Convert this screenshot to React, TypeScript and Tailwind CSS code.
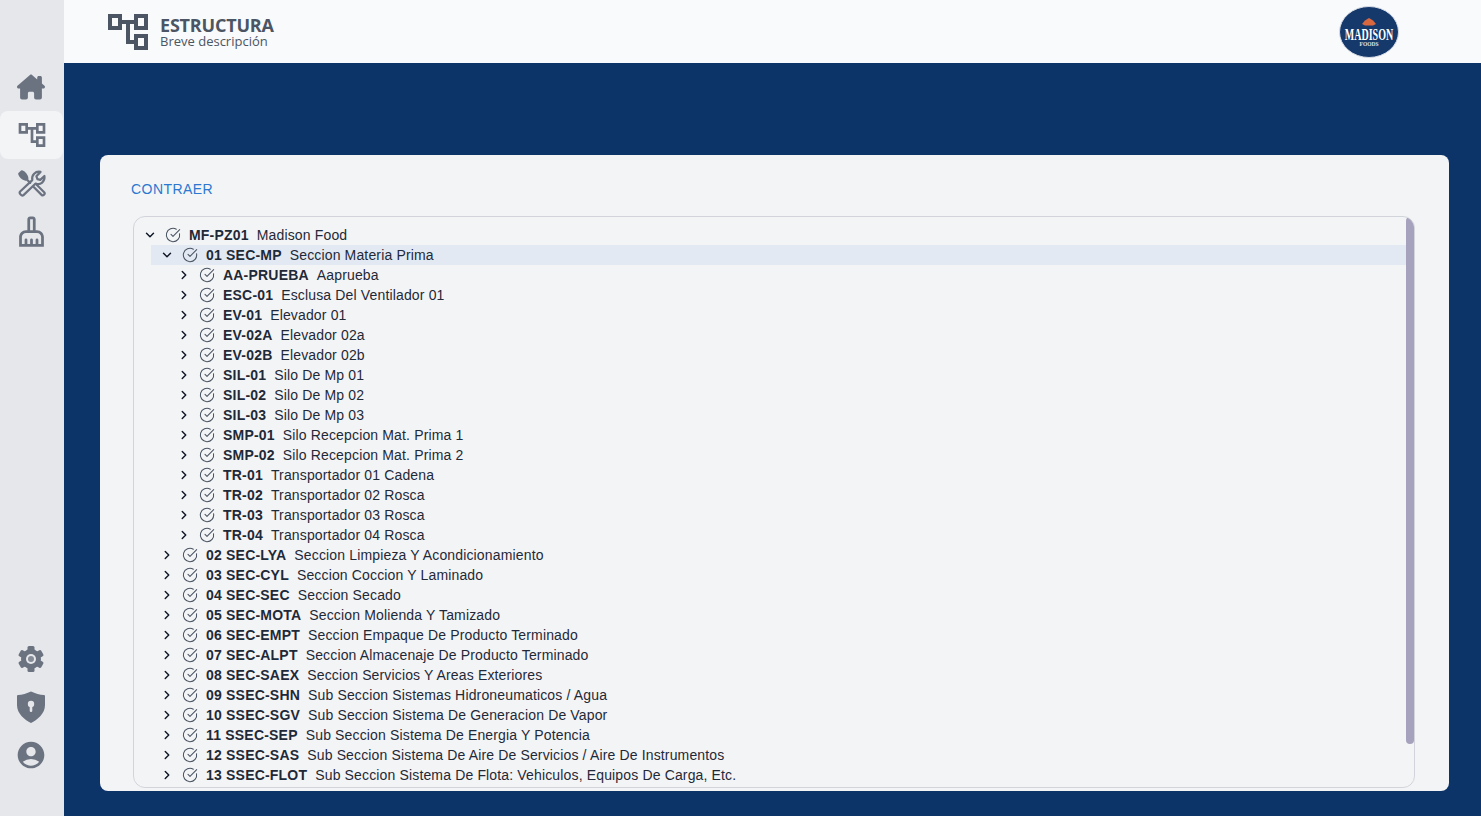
import { useState } from "react";
import { FaHouseChimney } from "react-icons/fa6";
import {
  MdAccountCircle,
  MdOutlineAccountTree,
  MdOutlineCleaningServices,
} from "react-icons/md";
import { ChevronDown, ChevronRight, CircleCheckBig } from "lucide-react";

interface TreeNode {
  code: string;
  name: string;
  open?: boolean;
  active?: boolean;
  children?: TreeNode[];
}

const equipos: TreeNode[] = [
  { code: "AA-PRUEBA", name: "Aaprueba" },
  { code: "ESC-01", name: "Esclusa Del Ventilador 01" },
  { code: "EV-01", name: "Elevador 01" },
  { code: "EV-02A", name: "Elevador 02a" },
  { code: "EV-02B", name: "Elevador 02b" },
  { code: "SIL-01", name: "Silo De Mp 01" },
  { code: "SIL-02", name: "Silo De Mp 02" },
  { code: "SIL-03", name: "Silo De Mp 03" },
  { code: "SMP-01", name: "Silo Recepcion Mat. Prima 1" },
  { code: "SMP-02", name: "Silo Recepcion Mat. Prima 2" },
  { code: "TR-01", name: "Transportador 01 Cadena" },
  { code: "TR-02", name: "Transportador 02 Rosca" },
  { code: "TR-03", name: "Transportador 03 Rosca" },
  { code: "TR-04", name: "Transportador 04 Rosca" },
];

const tree: TreeNode = {
  code: "MF-PZ01",
  name: "Madison Food",
  open: true,
  children: [
    {
      code: "01 SEC-MP",
      name: "Seccion Materia Prima",
      open: true,
      active: true,
      children: equipos,
    },
    { code: "02 SEC-LYA", name: "Seccion Limpieza Y Acondicionamiento" },
    { code: "03 SEC-CYL", name: "Seccion Coccion Y Laminado" },
    { code: "04 SEC-SEC", name: "Seccion Secado" },
    { code: "05 SEC-MOTA", name: "Seccion Molienda Y Tamizado" },
    { code: "06 SEC-EMPT", name: "Seccion Empaque De Producto Terminado" },
    { code: "07 SEC-ALPT", name: "Seccion Almacenaje De Producto Terminado" },
    { code: "08 SEC-SAEX", name: "Seccion Servicios Y Areas Exteriores" },
    { code: "09 SSEC-SHN", name: "Sub Seccion Sistemas Hidroneumaticos / Agua" },
    { code: "10 SSEC-SGV", name: "Sub Seccion Sistema De Generacion De Vapor" },
    { code: "11 SSEC-SEP", name: "Sub Seccion Sistema De Energia Y Potencia" },
    {
      code: "12 SSEC-SAS",
      name: "Sub Seccion Sistema De Aire De Servicios / Aire De Instrumentos",
    },
    {
      code: "13 SSEC-FLOT",
      name: "Sub Seccion Sistema De Flota: Vehiculos, Equipos De Carga, Etc.",
    },
  ],
};

const TreeItem = ({ node }: { node: TreeNode }) => {
  const [open, setOpen] = useState(!!node.open);
  return (
    <div>
      <div
        className={`flex h-5 items-center pl-[9px] ${node.active ? "bg-[#e2e9f3]" : ""}`}
      >
        <button
          onClick={() => setOpen(!open)}
          className="flex w-[14px] cursor-pointer items-center justify-center text-[#111827]"
        >
          {open ? (
            <ChevronDown size={14} strokeWidth={2.5} />
          ) : (
            <ChevronRight size={14} strokeWidth={2.5} />
          )}
        </button>
        <CircleCheckBig size={16} strokeWidth={1.6} className="ml-[8px] text-[#4b5563]" />
        <span className="ml-[8px] font-bold tracking-[0.2px] text-[#1f2937]">{node.code}</span>
        <span className="ml-2 tracking-[0.15px] text-[#1f2937]">{node.name}</span>
      </div>
      {open && node.children && (
        <div className="ml-[17px]">
          {node.children.map((child) => (
            <TreeItem key={child.code} node={child} />
          ))}
        </div>
      )}
    </div>
  );
};

const ToolsIcon = () => (
  <svg width="31" height="31" viewBox="0 0 24 24" fill="none" stroke="currentColor" strokeWidth="1.7" strokeLinejoin="round" strokeLinecap="round">
    <path d="M3.2 18.2 12.6 9.4C11.9 5.5 15 2.2 19 3L15.8 6.4 16.6 8.6 18.8 9.2 22 6.2C22.6 10.5 19 13.6 15.2 12L5.8 21C4.5 22.2 2 19.6 3.2 18.2Z" />
    <path d="M2.5 4.5 4.5 2.5C6.5 3 8.5 5.5 8.8 8L7.5 9C5 8.5 3 6.5 2.5 4.5Z" fill="currentColor" />
    <path d="M8 8.5 11 11.5" />
    <path d="M13.5 14.5 19.8 20.8C21 22 23 20 21.8 18.8L15.8 12.8" />
  </svg>
);

const GearIcon = () => (
  <svg width="28" height="28" viewBox="0 0 28 28" fill="currentColor">
    <circle cx="14" cy="14" r="10" />
    {[0, 60, 120, 180, 240, 300].map((deg) => (
      <rect key={deg} x="10.5" y="1" width="7" height="6" rx="1.5" transform={`rotate(${deg} 14 14)`} />
    ))}
    <circle cx="14" cy="14" r="5" fill="#e5e7eb" />
    <circle cx="14" cy="14" r="3" fill="#858b96" />
  </svg>
);

const ShieldIcon = () => (
  <svg width="28" height="32" viewBox="0 0 28 32" fill="currentColor">
    <path d="M14 .5C18 2.5 23 3.8 27 4 27.6 4.1 28 4.5 28 5L28 14C28 23 20 29 14 32 8 29 0 23 0 14L0 5C0 4.5.4 4.1 1 4 5 3.8 10 2.5 14 .5Z" />
    <circle cx="14" cy="13" r="3.2" fill="#e5e7eb" />
    <rect x="12.7" y="13" width="2.6" height="8" rx="1.2" fill="#e5e7eb" />
  </svg>
);

const MadisonLogo = () => (
  <svg width="60" height="52" viewBox="0 0 60 52">
    <ellipse cx="30" cy="26" rx="29.5" ry="25.5" fill="#16396c" stroke="#d8dde6" strokeWidth="1" />
    <path d="M23 18 26 14.5 30 12 34 14.5 37 18 34 19.5 26 19.5Z" fill="#d9683f" />
    <text transform="translate(30 34) scale(1 1.7)" textAnchor="middle" fontFamily="Liberation Serif, serif" fontWeight="700" fontSize="10" fill="#ffffff">
      MADISON
    </text>
    <text x="30" y="39.5" textAnchor="middle" fontFamily="Liberation Serif, serif" fontWeight="700" fontSize="5.5" fill="#dfe5ee">
      FOODS
    </text>
  </svg>
);

export default function App() {
  return (
    <div className="flex h-[816px] overflow-hidden bg-[#0d3469] font-['Liberation_Sans',sans-serif]">
      <aside className="flex w-16 shrink-0 flex-col justify-between bg-[#e5e7eb] pb-[37px] pt-[63px] text-[#6b7280]">
        <nav className="flex flex-col pr-[2px]">
          <a className="flex h-12 items-center justify-center">
            <FaHouseChimney size={28} />
          </a>
          <a className="mr-[-1px] flex h-12 items-center justify-center rounded-lg bg-[#f3f4f6]">
            <MdOutlineAccountTree size={32} />
          </a>
          <a className="flex h-12 items-center justify-center">
            <ToolsIcon />
          </a>
          <a className="flex h-12 items-center justify-center">
            <MdOutlineCleaningServices size={33} />
          </a>
        </nav>
        <nav className="flex flex-col pr-[2px]">
          <a className="flex h-12 items-center justify-center">
            <GearIcon />
          </a>
          <a className="flex h-12 items-center justify-center">
            <ShieldIcon />
          </a>
          <a className="flex h-12 items-center justify-center">
            <MdAccountCircle size={32} />
          </a>
        </nav>
      </aside>
      <div className="flex min-w-0 flex-1 flex-col">
        <header className="flex h-[63px] shrink-0 items-center justify-between bg-[#f9fafb] pl-10 pr-[82px]">
          <div className="flex items-center text-[#4b5563]">
            <MdOutlineAccountTree size={48} />
            <div className="ml-2 pt-[2px] font-['Open_Sans',sans-serif]">
              <h1 className="text-[18px] leading-[18px] font-bold tracking-[-0.2px]">ESTRUCTURA</h1>
              <p className="text-[13px] leading-[15px]">Breve descripción</p>
            </div>
          </div>
          <MadisonLogo />
        </header>
        <main className="flex-1 pb-[25px] pl-9 pr-8 pt-[92px]">
          <section className="flex h-[636px] flex-col rounded-lg bg-[#f3f4f6] pb-[3px] pl-[31px] pr-[34px] pt-[26px]">
            <button className="self-start text-sm leading-4 tracking-[0.45px] text-[#2a78d0]">CONTRAER</button>
            <div className="relative mt-[19px] ml-[2px] min-h-0 flex-1 overflow-hidden rounded-xl border border-[#d1d5db] pr-[7px] pt-2 text-sm">
              <TreeItem node={tree} />
              <div className="absolute right-0 top-0 h-[527px] w-2 rounded-full bg-[#a6a1bd]" />
            </div>
          </section>
        </main>
      </div>
    </div>
  );
}
